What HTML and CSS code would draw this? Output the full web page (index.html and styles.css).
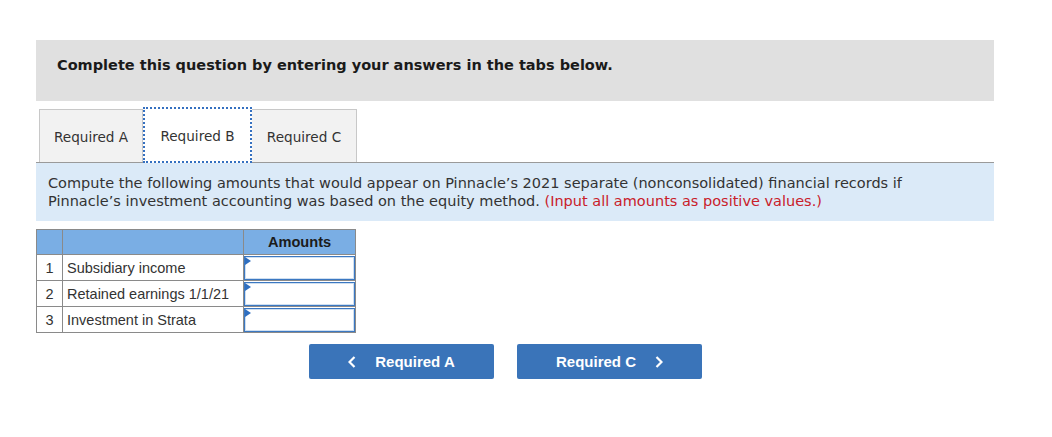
FILE: index.html
```html
<!DOCTYPE html>
<html>
<head>
<meta charset="utf-8">
<link rel="stylesheet" href="styles.css">
</head>
<body>
<div class="page">
  <div class="banner">Complete this question by entering your answers in the tabs below.</div>
  <div class="tabs">
    <div class="tab">Required A</div>
    <div class="tab active">Required B</div>
    <div class="tab">Required C</div>
  </div>
  <div class="instructions">
    Compute the following amounts that would appear on Pinnacle’s 2021 separate (nonconsolidated) financial records if<br>
    Pinnacle’s investment accounting was based on the equity method. <span class="red">(Input all amounts as positive values.)</span>
  </div>
  <table class="grid">
    <tr class="head"><th class="num"></th><th class="label"></th><th class="amt">Amounts</th></tr>
    <tr><td class="num">1</td><td class="label">Subsidiary income</td><td class="amt"><div class="input"></div></td></tr>
    <tr><td class="num">2</td><td class="label">Retained earnings 1/1/21</td><td class="amt"><div class="input"></div></td></tr>
    <tr><td class="num">3</td><td class="label">Investment in Strata</td><td class="amt"><div class="input"></div></td></tr>
  </table>
  <div class="nav">
    <div class="btn"><svg class="chev" width="8" height="12" viewBox="0 0 8 12"><polyline points="6.5,1 1.5,6 6.5,11" fill="none" stroke="#fff" stroke-width="2.2"/></svg><span>Required A</span></div>
    <div class="btn"><span>Required C</span><svg class="chev" width="8" height="12" viewBox="0 0 8 12"><polyline points="1.5,1 6.5,6 1.5,11" fill="none" stroke="#fff" stroke-width="2.2"/></svg></div>
  </div>
</div>
</body>
</html>
```
FILE: styles.css
```css
body { margin: 0; background: #fff; font-family: "DejaVu Sans", Verdana, sans-serif; color: #222; }
.page { padding: 40px 0 0 36px; width: 958px; }
.banner { height: 61px; box-sizing: border-box; background: #e0e0e0; padding: 16px 0 0 21px; font-weight: bold; font-size: 14.5px; line-height: 18px; color: #1a1a1a; }
.tabs { margin-top: 6px; height: 56px; display: flex; align-items: flex-end; padding-left: 3px; border-bottom: 1px solid #9a9a9a; box-sizing: border-box; }
.tab { height: 53px; box-sizing: border-box; border: 1px solid #c8c8c8; border-bottom: none; background: #f2f2f2; display: flex; align-items: center; justify-content: center; font-size: 13.6px; color: #333; width: 104px; padding-top: 1px; }
.tab + .tab { border-left: none; }
.tab.active { height: 56px; width: 109px; background: #fff; border: 2px dotted #3570c0; margin-bottom: -1px; padding-top: 1px; }
.tab.active + .tab { width: 105px; }
.instructions { background: #dbeaf8; padding: 11px 12px 11px; font-size: 14.5px; line-height: 18px; color: #333; }
.red { color: #c9202a; }
.grid { margin-top: 8px; border-collapse: collapse; font-family: "Liberation Sans", Arial, sans-serif; font-size: 14.5px; line-height: 16px; color: #333; }
.grid td, .grid th { border: 1px solid #8a8a8a; padding: 0; vertical-align: middle; }
.grid .head th { background: #7aaee4; height: 24px; font-weight: bold; font-size: 14.6px; color: #1c1c1c; }
.grid .num { width: 25px; text-align: center; }
.grid .label { width: 176px; padding-left: 4px; text-align: left; }
.grid .amt { width: 111px; }
.grid tr:not(.head) td { height: 25px; }
.input { height: 22px; margin: 0; border: 1px solid #3b78c2; box-shadow: inset 0 0 0 1px #cfdff0; position: relative; background: #fff; }
.input::before { content: ""; position: absolute; left: 0; top: 0; border-left: 6px solid #2f6fc0; border-top: 4px solid transparent; border-bottom: 4px solid transparent; }
.nav { margin-top: 11px; margin-left: 273px; display: flex; gap: 23px; }
.btn { width: 185px; height: 35px; background: #3a74b9; border-radius: 2px; color: #fff; font-family: "Liberation Sans", Arial, sans-serif; font-weight: bold; font-size: 15px; display: flex; align-items: center; justify-content: center; gap: 19px; }
.chev { display: block; }
```
